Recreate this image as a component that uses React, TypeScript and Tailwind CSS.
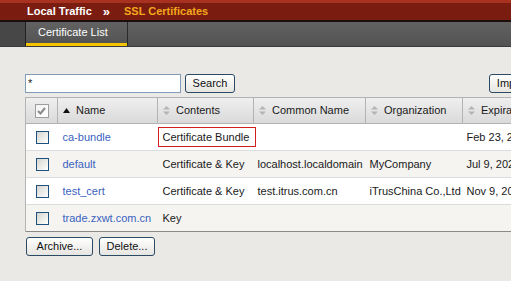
import React from "react";

type Row = {
  name: string;
  contents: string;
  common: string;
  org: string;
  expires: string;
  flagged?: boolean;
};

const rows: Row[] = [
  { name: "ca-bundle", contents: "Certificate Bundle", common: "", org: "", expires: "Feb 23, 2032", flagged: true },
  { name: "default", contents: "Certificate & Key", common: "localhost.localdomain", org: "MyCompany", expires: "Jul 9, 2025" },
  { name: "test_cert", contents: "Certificate & Key", common: "test.itrus.com.cn", org: "iTrusChina Co.,Ltd", expires: "Nov 9, 2015" },
  { name: "trade.zxwt.com.cn", contents: "Key", common: "", org: "", expires: "" },
];

function SortIcon({ active }: { active?: boolean }) {
  if (active) {
    return (
      <svg width="7" height="5" viewBox="0 0 7 5" className="shrink-0">
        <path d="M0 5 L3.5 0 L7 5 Z" fill="#111" />
      </svg>
    );
  }
  return (
    <svg width="7" height="9" viewBox="0 0 7 9" className="shrink-0">
      <path d="M0 3.5 L3.5 0 L7 3.5 Z" fill="#b4b4b4" />
      <path d="M0 5.5 L3.5 9 L7 5.5 Z" fill="#b4b4b4" />
    </svg>
  );
}

function Check() {
  return (
    <span className="block w-[13px] h-[13px] border border-[#1c5180] bg-gradient-to-br from-[#d6d6cf] to-white" />
  );
}

function Btn({ children, className = "" }: { children: React.ReactNode; className?: string }) {
  return (
    <button
      className={`h-[19px] rounded-[3px] border border-[#2a4a66] bg-gradient-to-b from-white to-[#e6e5e0] text-[11px] text-[#111] leading-none ${className}`}
    >
      {children}
    </button>
  );
}

export default function App() {
  const head = ["Name", "Contents", "Common Name", "Organization", "Expiration Date"];

  return (
    <div className="w-[511px] h-[281px] overflow-hidden bg-[#ebe9e5] font-['Liberation_Sans',Arial,sans-serif] text-[11px] text-[#1a1a1a]">
      {/* Breadcrumb bar */}
      <div className="h-[3px] bg-[#a8321f]" />
      <div className="h-[17px] bg-[#7a1d10] flex items-center pl-[27px] font-bold text-[11px]">
        <span className="text-white">Local Traffic</span>
        <span className="text-white ml-[11px] text-[13px] leading-none">»</span>
        <span className="text-[#f3a81c] ml-[14px]">SSL Certificates</span>
      </div>
      <div className="h-[2px] bg-[#1a0f0c]" />

      {/* Tabs */}
      <div className="h-[24px] flex bg-gradient-to-b from-[#626262] to-[#525252]">
        <div className="w-[26px] bg-[#474747] border-r border-[#222]" />
        <div className="w-[102px] border-r border-[#2a2a2a] flex flex-col">
          <div className="flex-1 flex items-center pl-[12px] text-white text-[11px]">Certificate List</div>
          <div className="h-[3px] bg-[#f5c400]" />
        </div>
      </div>
      <div className="h-[1px] bg-[#3a3a3a]" />

      {/* Content */}
      <div className="pl-[25px] pt-[27px]">
        <div className="w-[520px] flex items-center">
          <div className="w-[156px] h-[19px] border border-[#7f9db9] bg-white pl-[2px] flex items-center text-[11px]">*</div>
          <Btn className="w-[50px] ml-[4px]">Search</Btn>
          <Btn className="w-[56px] ml-auto">Import...</Btn>
        </div>

        <table className="mt-[4px] table-fixed border-collapse w-[560px] text-[11px]">
          <colgroup>
            <col className="w-[32px]" />
            <col className="w-[100px]" />
            <col className="w-[96px]" />
            <col className="w-[112px]" />
            <col className="w-[97px]" />
            <col className="w-[123px]" />
          </colgroup>
          <thead>
            <tr className="h-[26px] bg-gradient-to-b from-[#efefef] to-[#d9d9d9]">
              <th className="border border-[#b3b3b3] p-0">
                <span className="mx-auto flex items-center justify-center w-[14px] h-[14px] border border-[#9d9d9d] bg-gradient-to-br from-[#f4f4f4] to-white">
                  <svg width="9" height="8" viewBox="0 0 9 8">
                    <path d="M1 4 L3.5 6.5 L8 1" stroke="#8a8a8a" strokeWidth="2" fill="none" />
                  </svg>
                </span>
              </th>
              {head.map((h, i) => (
                <th key={h} className="border border-[#b3b3b3] px-[5px] font-normal text-left whitespace-nowrap overflow-hidden">
                  <span className="flex items-center gap-[6px]">
                    <SortIcon active={i === 0} />
                    {h}
                  </span>
                </th>
              ))}
            </tr>
          </thead>
          <tbody>
            {rows.map((r, i) => (
              <tr
                key={r.name}
                className={`h-[27px] border-b ${i === rows.length - 1 ? "border-[#8a8a8a]" : "border-[#dcdcdc]"} ${i % 2 ? "bg-[#f5f4f1]" : "bg-white"}`}
              >
                <td className="p-0 border-l border-[#b3b3b3]">
                  <span className="block ml-[10px] w-[13px]">
                    <Check />
                  </span>
                </td>
                <td className="px-[5px] whitespace-nowrap text-[#3a62c0]">{r.name}</td>
                <td className="px-[5px] whitespace-nowrap relative">
                  {r.contents}
                  {r.flagged && (
                    <span className="absolute left-0 top-[3px] w-[98px] h-[20px] border border-[#d01f1f]" />
                  )}
                </td>
                <td className="px-[4px] whitespace-nowrap overflow-hidden">{r.common}</td>
                <td className="px-[4px] whitespace-nowrap overflow-hidden">{r.org}</td>
                <td className="px-[4px] whitespace-nowrap overflow-hidden">{r.expires}</td>
              </tr>
            ))}
          </tbody>
        </table>

        <div className="flex gap-[6px] mt-[5px] pl-[1px]">
          <Btn className="w-[67px]">Archive...</Btn>
          <Btn className="w-[56px]">Delete...</Btn>
        </div>
      </div>
    </div>
  );
}
